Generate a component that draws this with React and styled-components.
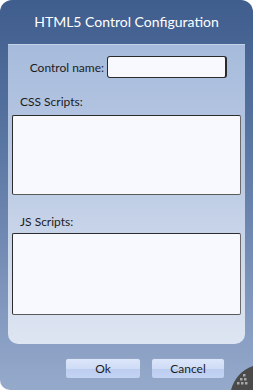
import React from "react";
import styled, { createGlobalStyle } from "styled-components";

const Global = createGlobalStyle`
  html, body { margin: 0; padding: 0; background: #ffffff; }
  body { font-family: Lato, "Noto Sans", sans-serif; }
`;

const Window = styled.div`
  position: relative;
  width: 253px;
  height: 390px;
  box-sizing: border-box;
  border-radius: 12px 12px 0 10px;
  background: linear-gradient(to bottom, #3f5d8d 0%, #5c78a4 40%, #8399bf 80%, #95aacb 100%);
  display: flex;
  flex-direction: column;
  overflow: hidden;
`;

const TitleBar = styled.div`
  height: 44px;
  display: flex;
  align-items: center;
  justify-content: center;
  color: #ffffff;
  font-size: 14px;
  padding-bottom: 1px;
  box-sizing: border-box;
`;

const Panel = styled.div`
  margin: 0 8px;
  height: 300px;
  box-sizing: border-box;
  border-radius: 0 0 10px 10px;
  background: linear-gradient(to bottom, #a6bbdc 0%, #bccbe4 45%, #d6dfee 85%, #dde5f2 100%);
  box-shadow: inset 0 1px 0 rgba(255, 255, 255, 0.35);
  padding: 12px 4px 0 4px;
  display: flex;
  flex-direction: column;
`;

const FieldRow = styled.div`
  height: 22px;
  display: flex;
  align-items: center;
  gap: 3px;
`;

const RowLabel = styled.label`
  width: 92px;
  text-align: right;
  font-size: 12px;
  color: #1c1c1c;
  white-space: nowrap;
`;

const TextInput = styled.input`
  width: 120px;
  height: 22px;
  box-sizing: border-box;
  border: 1px solid #2a2a2a;
  border-right-width: 2px;
  border-radius: 3px;
  background: #f8f9fe;
  outline: none;
  padding: 0 3px;
`;

const SectionLabel = styled.div`
  font-size: 12px;
  line-height: 16px;
  color: #1c1c1c;
  padding-left: 8px;
  margin-top: ${(p) => p.$top}px;
  margin-bottom: ${(p) => p.$bottom}px;
`;

const ScriptArea = styled.textarea`
  display: block;
  width: 229px;
  height: ${(p) => p.$h}px;
  box-sizing: border-box;
  border: 1px solid #2c2c2c;
  border-right-color: #6a6a6a;
  border-bottom-color: #5a5a5a;
  border-radius: 2px;
  background: #f8f9fe;
  resize: none;
  outline: none;
  margin: 0;
`;

const Footer = styled.div`
  display: flex;
  justify-content: flex-end;
  gap: 10px;
  padding: 14px 28px 0 0;
`;

const Button = styled.button`
  width: ${(p) => p.$w}px;
  height: 21px;
  box-sizing: border-box;
  border: 1px solid #93a6c6;
  border-radius: 3px;
  background: linear-gradient(to bottom, #dce6fa 0%, #cfdcf6 50%, #bccdf1 51%, #c3d3f4 100%);
  font-family: Lato, "Noto Sans", sans-serif;
  font-size: 12px;
  color: #1c1c1c;
  padding: 0;
  line-height: 19px;
`;

const Grip = styled.svg`
  position: absolute;
  right: 0;
  bottom: 0;
  width: 22px;
  height: 25px;
`;

const dots = [
  [12, 9],
  [9, 13], [13, 13],
  [6, 17], [10, 17], [14, 17],
];

export default function App() {
  return (
    <>
      <Global />
      <Window>
        <TitleBar>HTML5 Control Configuration</TitleBar>
        <Panel>
          <FieldRow>
            <RowLabel>Control name:</RowLabel>
            <TextInput />
          </FieldRow>
          <SectionLabel $top={16} $bottom={5}>CSS Scripts:</SectionLabel>
          <ScriptArea $h={80} />
          <SectionLabel $top={19} $bottom={3}>JS Scripts:</SectionLabel>
          <ScriptArea $h={82} />
        </Panel>
        <Footer>
          <Button $w={76}>Ok</Button>
          <Button $w={74}>Cancel</Button>
        </Footer>
        <Grip viewBox="0 0 22 25">
          <path d="M0 25 C3 14 10 5 22 1 L22 25 Z" fill="#4a4a4a" />
          {dots.map(([x, y], i) => (
            <rect key={i} x={x} y={y} width="2.5" height="2.5" fill="#a8a8a8" />
          ))}
        </Grip>
      </Window>
    </>
  );
}
